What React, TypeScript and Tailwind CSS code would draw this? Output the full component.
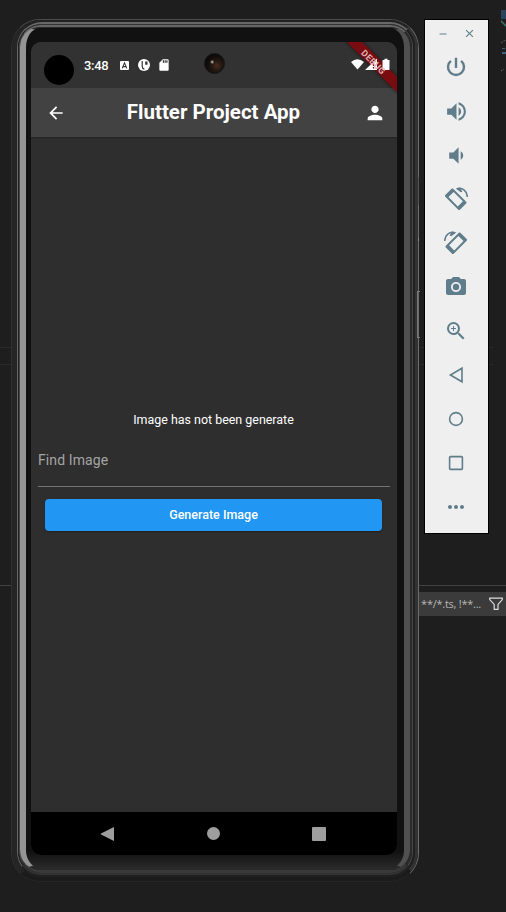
import type { ReactNode } from "react";
import {
  MdArrowBack,
  MdClose,
  MdMoreHoriz,
  MdPerson,
  MdPhotoCamera,
  MdRemove,
  MdSdCard,
  MdVolumeDown,
  MdVolumeUp,
  MdZoomIn,
} from "react-icons/md";

function RotateIcon({ flip = false }: { flip?: boolean }) {
  return (
    <svg width="24" height="24" viewBox="0 0 24 24" className={flip ? "-scale-x-100" : ""}>
      <path
        d="M1.3 8.1 7.6 1.8Q8.4 1.1 9.2 1.8L22.2 14.8Q22.9 15.6 22.2 16.4L15.9 22.7Q15.1 23.4 14.3 22.7L1.3 9.7Q.6 8.9 1.3 8.1ZM4.5 10.1 13.8 19.4 18.9 14.3 9.6 5Z"
        fill="currentColor"
        fillRule="evenodd"
      />
      <path d="M13 1.7C18.5.2 23.4 4.2 23.3 10" fill="none" stroke="currentColor" strokeWidth="1.5" />
      <path d="M11.7 1.4 16.2.4 18.3 4.8 16.8 5.2Z" fill="currentColor" />
    </svg>
  );
}

const tools: { name: string; icon: ReactNode }[] = [
  {
    name: "Power",
    icon: (
      <svg width="24" height="24" viewBox="0 0 24 24" fill="none" stroke="currentColor" strokeWidth="2.4">
        <path d="M12 2.8V13M17.1 5.9a8 8 0 1 1-10.2 0" />
      </svg>
    ),
  },
  { name: "Volume up", icon: <MdVolumeUp size={25} /> },
  { name: "Volume down", icon: <MdVolumeDown size={25} /> },
  { name: "Rotate left", icon: <RotateIcon /> },
  { name: "Rotate right", icon: <RotateIcon flip /> },
  { name: "Take screenshot", icon: <MdPhotoCamera size={24} /> },
  { name: "Zoom", icon: <MdZoomIn size={24} /> },
  {
    name: "Back",
    icon: (
      <svg width="16" height="18" viewBox="0 0 16 18" fill="none" stroke="currentColor" strokeWidth="1.6">
        <path d="M14 2.2v13.6L2.4 9Z" />
      </svg>
    ),
  },
  {
    name: "Home",
    icon: (
      <svg width="16" height="16" viewBox="0 0 16 16" fill="none" stroke="currentColor" strokeWidth="1.6">
        <circle cx="8" cy="8" r="6.4" />
      </svg>
    ),
  },
  {
    name: "Overview",
    icon: (
      <svg width="16" height="16" viewBox="0 0 16 16" fill="none" stroke="currentColor" strokeWidth="1.6">
        <rect x="1.6" y="1.6" width="12.8" height="12.8" rx=".8" />
      </svg>
    ),
  },
  { name: "More", icon: <MdMoreHoriz size={24} /> },
];

function Toolbar() {
  return (
    <aside className="mt-[19px] ml-[5px] flex h-[515px] w-[65px] flex-col border border-black bg-[#efefef] text-[#607d8b]">
      <div className="flex h-[25px] items-end justify-between pr-3 pl-3">
        <MdRemove size={12} className="mb-[5px]" />
        <MdClose size={13} className="mb-[5px]" />
      </div>
      {tools.map((tool) => (
        <button key={tool.name} aria-label={tool.name} className="flex h-11 w-full items-center justify-center pr-px">
          {tool.icon}
        </button>
      ))}
    </aside>
  );
}

function StatusBar() {
  return (
    <div className="relative flex h-[46px] shrink-0 items-center bg-[#323232] text-white">
      <span className="mt-[9px] ml-[13px] size-[30px] rounded-full bg-black" />
      <span className="ml-2.5 w-[26px] text-[13px] leading-none font-medium tracking-tight">3:48</span>
      <svg width="9" height="9" viewBox="0 0 9 9" className="ml-2.5">
        <rect width="9" height="9" rx="1" fill="#fff" />
        <path d="M2.2 7.4 4.5 1.9 6.8 7.4M3 5.6h3" fill="none" stroke="#323232" strokeWidth="1.1" />
      </svg>
      <svg width="12" height="12" viewBox="0 0 12 12" className="ml-[9px]">
        <circle cx="6" cy="6" r="6" fill="#fff" />
        <path d="M4.2 2v5.2q0 2.3 2.2 3" fill="none" stroke="#323232" strokeWidth="1.2" />
        <path d="M7.2 2.4h2.3v3.4H7.2z" fill="#323232" />
      </svg>
      <MdSdCard size={14} className="ml-[7px]" />
      <span className="absolute top-[11px] left-[173px] size-[21px] rounded-full border border-[#151515] bg-[radial-gradient(circle_at_38%_42%,#ddd_0,#665_7%,transparent_14%),radial-gradient(circle_at_62%_62%,#4a2d1c_0,#241812_30%,#0c0a09_65%)]" />
    </div>
  );
}

function DebugBanner() {
  return (
    <div className="pointer-events-none absolute top-0 right-0 size-[52px] overflow-hidden">
      <div className="absolute top-[13px] left-[-17px] h-[11px] w-[90px] rotate-45 bg-[#780c11] shadow-[0_0_4px_#0008]" />
      <svg width="39" height="13" viewBox="0 0 39 13" fill="#fff" className="absolute top-4 left-[6px]">
        <path d="M0 4Q6.5-1.5 13 4L6.5 11.5Z" />
        <path d="M14 12 26 .5V12Z" />
        <path d="M31.5 2h2V.8h3V2h2v10h-7Z" />
        <path d="M22.5 4.5V8M22.5 9v1.5" stroke="#5a1518" strokeWidth="1.3" />
      </svg>
      <div className="absolute top-[15px] left-[-17px] flex h-[11px] w-[90px] rotate-45 items-center justify-center text-[9px] leading-none font-bold tracking-[0.3px] text-[#dfb3b3]">
        <span>DEBUG</span>
      </div>
    </div>
  );
}

function Screen() {
  return (
    <main className="relative flex h-[813px] w-[366px] flex-col overflow-hidden rounded-[10px] bg-[#2e2e2e] font-[Roboto,sans-serif] text-white">
      <StatusBar />
      <header className="flex h-[49px] shrink-0 items-center justify-between bg-[#424242] pr-[11px] pl-[15px] shadow-[0_1px_2px_#0004]">
        <MdArrowBack size={20} />
        <h1 className="mr-[3px] text-[20.5px] leading-none font-bold">Flutter Project App</h1>
        <MdPerson size={22} />
      </header>
      <section className="flex grow flex-col px-[7px] pt-[274px]">
        <p className="pr-px text-center text-[12.45px] leading-[18px]">Image has not been generate</p>
        <div className="mt-[9px] h-[49px] border-b border-[#747474] pt-3 text-[14px] leading-5 tracking-[0.1px] text-[#a4a4a4]">
          Find Image
        </div>
        <button className="mr-2 ml-[7px] mt-3 h-8 rounded-[4px] bg-[#2196f3] text-[12.5px] font-medium shadow-[0_1px_2px_#0005]">
          Generate Image
        </button>
      </section>
      <nav className="flex h-[43px] shrink-0 items-center justify-between bg-black pr-[71px] pl-[69px]">
        <svg width="14" height="16" viewBox="0 0 14 16" fill="#9e9e9e">
          <path d="M14 1.3v13.4Q14 15 13.5 14.8L1 8.5Q.2 8 1 7.5L13.5 1.2Z" />
        </svg>
        <span className="size-[13px] rounded-full bg-[#9e9e9e]" />
        <span className="size-3.5 rounded-[1px] bg-[#9e9e9e]" />
      </nav>
      <DebugBanner />
    </main>
  );
}

function Phone() {
  return (
    <div className="mt-[19px] ml-[11px] h-[863px] w-[408px] shrink-0 rounded-[29px] border border-t-[#4a4a4a] border-r-[#6c6c6c] border-b-[#252525] border-l-[#303030] bg-[#222]">
      <div className="h-full rounded-[28px] border-t-2 border-r-[3px] border-b-4 border-l-[5px] border-t-[#222] border-r-[#323232] border-b-[#1b1b1b] border-l-[#252525]">
        <div className="h-full rounded-[25px] border-t-2 border-r-2 border-b-2 border-l border-t-[#686868] border-r-[#202020] border-b-[#202020] border-l-[#666] bg-[#202020]">
          <div className="h-full rounded-[23px] border-t border-r border-b-2 border-l border-t-[#333] border-r-[#484848] border-b-[#333] border-l-[#222]">
            <div className="h-full rounded-[22px] border-t-2 border-r-2 border-b-[3px] border-l border-t-[#666] border-r-[#2a2a2a] border-b-[#393939] border-l-[#484848]">
              <div className="h-full rounded-[20px] border-t border-r-[6px] border-b-2 border-l-[6px] border-t-[#292929] border-r-[#505050] border-b-[#2a2a2a] border-l-[#949494] bg-[linear-gradient(#111,#111_98%,#292929)]">
                <div className="flex h-full pt-[14px] pl-[5px]">
                  <Screen />
                </div>
              </div>
            </div>
          </div>
        </div>
      </div>
    </div>
  );
}

function Editor() {
  return (
    <div className="absolute inset-0 flex flex-col">
      <div className="flex h-[585px] flex-col">
        <div className="flex h-[347px] justify-end">
          <svg width="6" height="80" viewBox="0 0 6 80" className="mt-2.5">
            <path d="M1 0h5v9H1z" fill="#27465d" />
            <path d="m1 10 5 5v2L1 12" fill="#34796c" />
            <path d="M2 38h3v1H2zm0 4h4v2H2z" fill="#376780" />
            <path d="m1 33 4-3M1 61l3-2" stroke="#777" strokeDasharray="1 1" />
          </svg>
        </div>
        <div className="h-[18px] w-[493px] border-y border-[#292929]" />
      </div>
      <div className="h-[7px] border-t border-[#424242]" />
      <div className="flex h-6 items-center justify-end bg-[linear-gradient(90deg,transparent_418px,#3b3b3b_418px)] pr-[3px] font-['Open_Sans',sans-serif] text-[11px] text-[#b8b8b8]">
        <span className="mr-2 tracking-[-0.25px]">**/*.ts, !**...</span>
        <svg width="14" height="14" viewBox="0 0 14 14" fill="none" stroke="#ddd" strokeWidth="1.2">
          <path d="M.7 1.2h12.6v1.4L9 7.4v5H5.2v-5L.7 2.6Z" />
        </svg>
      </div>
    </div>
  );
}

export default function App() {
  return (
    <div className="relative h-[912px] w-[506px] overflow-hidden bg-[#1e1e1e] font-[Roboto,sans-serif]">
      <Editor />
      <div className="relative flex items-start">
        <Phone />
        <Toolbar />
      </div>
      <div className="absolute top-[177px] left-[418px] h-7 w-px bg-[#555]" />
      <div className="absolute top-[238px] left-[418px] h-[3px] w-px bg-[#888]" />
      <div className="absolute top-[291px] left-[417px] h-[47px] w-[3px] border-y border-l border-[#777]" />
    </div>
  );
}
